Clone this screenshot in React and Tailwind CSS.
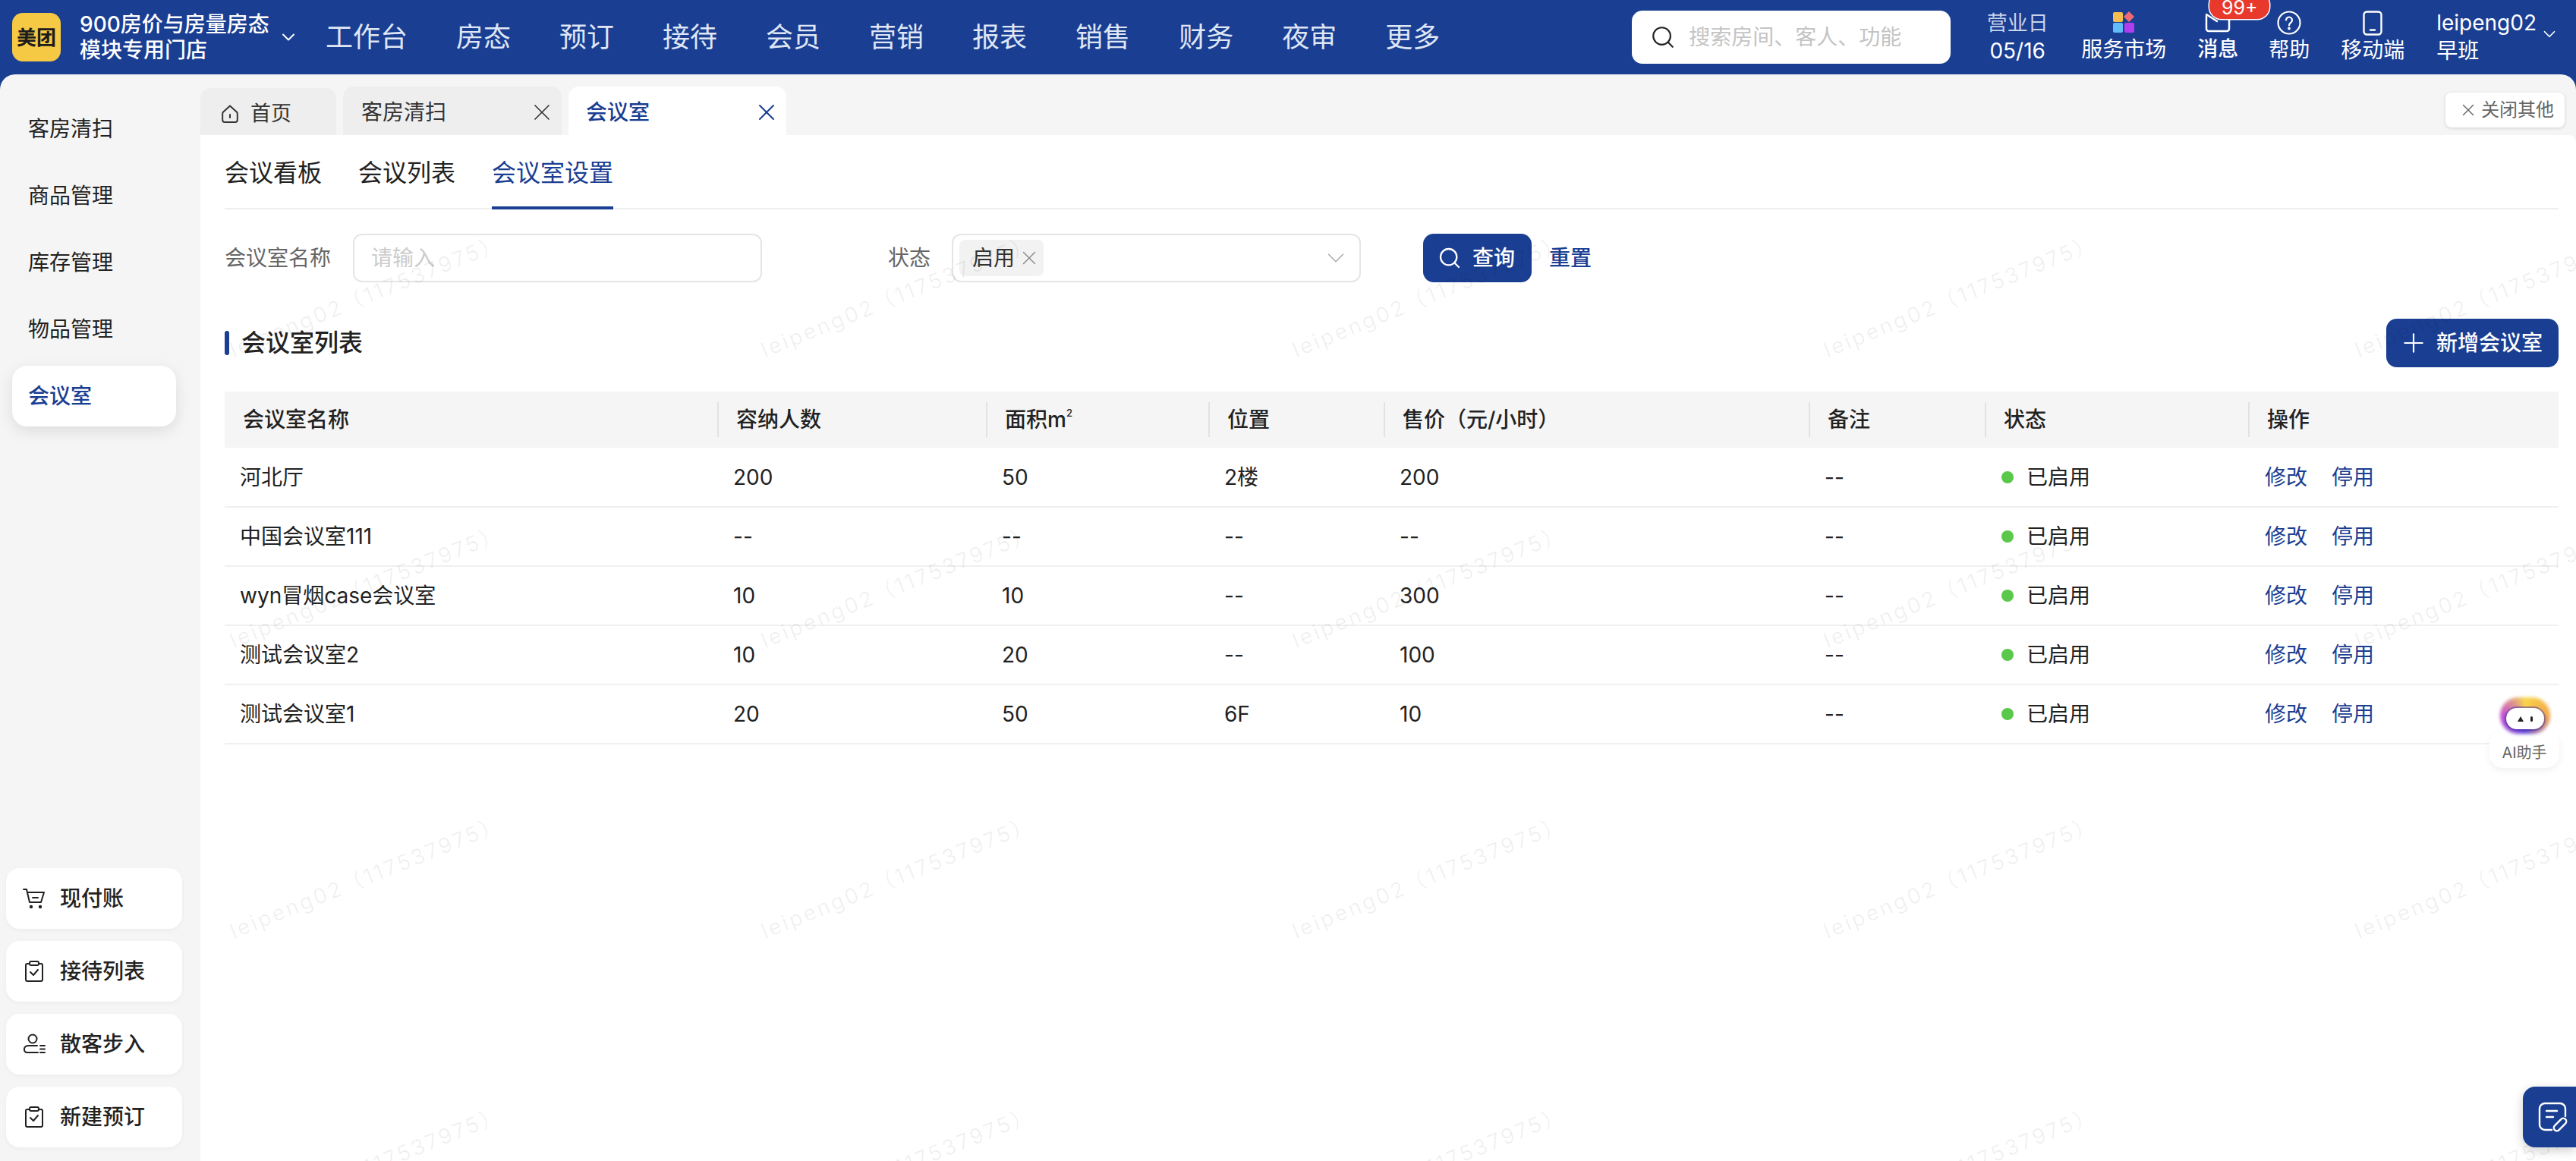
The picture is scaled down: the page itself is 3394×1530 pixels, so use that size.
import React from "react";
import { ChevronDown, Search, X, Plus } from "lucide-react";

const navItems = ["工作台", "房态", "预订", "接待", "会员", "营销", "报表", "销售", "财务", "夜审", "更多"];
const sideItems = ["客房清扫", "商品管理", "库存管理", "物品管理"];

const columns = [
  { title: "会议室名称", w: "w-[650px]" },
  { title: "容纳人数", w: "w-[354px]" },
  { title: "面积", sup: true, w: "w-[293px]" },
  { title: "位置", w: "w-[231px]" },
  { title: "售价（元/小时）", w: "w-[560px]" },
  { title: "备注", w: "w-[232px]" },
  { title: "状态", w: "w-[347px]" },
  { title: "操作", w: "w-[408px]" },
];

const rows = [
  ["河北厅", "200", "50", "2楼", "200", "--"],
  ["中国会议室111", "--", "--", "--", "--", "--"],
  ["wyn冒烟case会议室", "10", "10", "--", "300", "--"],
  ["测试会议室2", "10", "20", "--", "100", "--"],
  ["测试会议室1", "20", "50", "6F", "10", "--"],
];

function CartIcon() {
  return (
    <svg width="30" height="28" viewBox="0 0 30 28" fill="none" stroke="#222" strokeWidth="2" strokeLinecap="round" strokeLinejoin="round">
      <path d="M1 2h4l4 17h15l4-13H6" />
      <path d="M13 13h7" />
      <circle cx="11" cy="25" r="1.2" fill="#222" />
      <circle cx="23" cy="25" r="1.2" fill="#222" />
    </svg>
  );
}

function ClipboardIcon() {
  return (
    <svg width="30" height="30" viewBox="0 0 30 30" fill="none" stroke="#222" strokeWidth="2" strokeLinecap="round" strokeLinejoin="round">
      <path d="M9 5H6a2 2 0 0 0-2 2v19a2 2 0 0 0 2 2h18a2 2 0 0 0 2-2V7a2 2 0 0 0-2-2h-3" />
      <rect x="9" y="2" width="12" height="5" rx="2" />
      <path d="M10 16l4 4 6-7" />
    </svg>
  );
}

function GuestIcon() {
  return (
    <svg width="30" height="28" viewBox="0 0 30 28" fill="none" stroke="#222" strokeWidth="2" strokeLinecap="round">
      <circle cx="13" cy="7" r="5.500" />
      <path d="M19 16H9a6 4 0 0 0-7 4a4 4 0 0 0 4 5h14" />
      <path d="M23 16h6M23 20.500h6M23 25h6" />
    </svg>
  );
}

function HomeIcon() {
  return (
    <svg width="22" height="24" viewBox="0 0 22 24" fill="none" stroke="#333" strokeWidth="2" strokeLinecap="round" strokeLinejoin="round">
      <path d="M11 1.500L2.200 9.500a3 3 0 0 0-1 2.200V20a3 3 0 0 0 3 3h13.600a3 3 0 0 0 3-3v-8.300a3 3 0 0 0-1-2.200z" />
      <path d="M11 13v4" />
    </svg>
  );
}

function MarketIcon() {
  return (
    <svg width="28" height="28" viewBox="0 0 28 28">
      <rect x="0" y="1" width="13" height="13" rx="2" fill="#f5bf4f" />
      <path d="M21 0l7 7-7 7-7-7z" fill="#ee6a72" />
      <rect x="0" y="15" width="13" height="13" rx="2" fill="#62bcf8" />
      <rect x="15" y="15" width="13" height="13" rx="2" fill="#b03df0" />
    </svg>
  );
}

function MsgIcon() {
  return (
    <svg width="34" height="28" viewBox="0 0 34 28" fill="none" stroke="#fff" strokeWidth="2.500" strokeLinecap="round" strokeLinejoin="round">
      <path d="M2 6v17a3 3 0 0 0 3 3h24a3 3 0 0 0 3-3V10" />
      <path d="M2 4l14 9" />
    </svg>
  );
}

function HelpIcon() {
  return (
    <svg width="32" height="32" viewBox="0 0 32 32" fill="none" stroke="#fff" strokeWidth="2.200" strokeLinecap="round">
      <circle cx="16" cy="16" r="14.500" />
      <path d="M12 12.500a4 4 0 1 1 6 3.500c-1.500 1-2 1.800-2 3.500" />
      <circle cx="16" cy="23.500" r="0.800" fill="#fff" />
    </svg>
  );
}

function PhoneIcon() {
  return (
    <svg width="26" height="33" viewBox="0 0 26 33" fill="none" stroke="#fff" strokeWidth="2.400" strokeLinecap="round">
      <rect x="1.500" y="1.500" width="23" height="30" rx="4" />
      <path d="M10 25.500h6" />
    </svg>
  );
}

function NoteIcon() {
  return (
    <svg width="40" height="40" viewBox="0 0 40 40" fill="none" stroke="#fff" strokeWidth="2.400" strokeLinecap="round" strokeLinejoin="round">
      <path d="M18 37H9a7 7 0 0 1-7-7V9a7 7 0 0 1 7-7h20a7 7 0 0 1 7 7v10" />
      <path d="M11 12h14M11 20h9" />
      <rect x="19" y="26" width="20" height="8" rx="4" transform="rotate(-45 29 30)" />
    </svg>
  );
}

function AiIcon() {
  return (
    <div className="relative h-[50px] w-[68px]">
      <div className="absolute inset-[1px] rounded-[24px] bg-[conic-gradient(#f8d84a,#f3a84a,#5a40d8,#c34fd0,#f8d84a)] blur-[2px]" />
      <div className="absolute left-[9px] top-[15px] flex h-[28px] w-[50px] items-center justify-center gap-[9px] rounded-[14px] bg-white shadow-[0_0_0_2px_rgba(70,50,160,0.5)]">
        <span className="border-x-[4px] border-b-[7px] border-x-transparent border-b-[#222]" />
        <span className="h-[7px] w-[3px] rounded-full bg-[#222]" />
      </div>
    </div>
  );
}

function Watermarks() {
  const marks = [];
  for (let i = 0; i < 20; i++) {
    marks.push(
      <div key={i} className="flex items-center justify-center">
        <span className="-rotate-[22deg] whitespace-nowrap text-[28px] tracking-[3px] text-[#000000]/[0.06]">leipeng02（117537975）</span>
      </div>
    );
  }
  return (
    <div className="pointer-events-none absolute inset-0 overflow-hidden">
      <div className="ml-[-131px] mt-[20px] grid grid-cols-[repeat(5,700px)] grid-rows-[repeat(4,383px)]">{marks}</div>
    </div>
  );
}

function Header() {
  return (
    <div className="flex h-[98px] shrink-0 items-center bg-[#1a3e92] pl-[16px] text-white">
      <div className="flex h-[64px] w-[64px] items-center justify-center rounded-[14px] bg-[#f6c945] text-[26px] font-bold text-[#1c1c1c]">美团</div>
      <div className="ml-[25px] w-[252px] text-[28px] font-medium leading-[34px]">
        <div>900房价与房量房态</div>
        <div>模块专用门店</div>
      </div>
      <ChevronDown size={28} strokeWidth={1.7} className="ml-[9px]" />
      <div className="ml-[35px] flex gap-[64px] text-[36px] text-[#dfe6f5]">
        {navItems.map((n) => (
          <span key={n}>{n}</span>
        ))}
      </div>
      <div className="ml-[253px] flex h-[70px] w-[420px] items-center rounded-[14px] bg-white pl-[24px]">
        <Search size={34} color="#222" strokeWidth={1.5} />
        <span className="ml-[17px] text-[28px] text-[#c4c4c4]">搜索房间、客人、功能</span>
      </div>
      <div className="ml-[46px] flex w-[84px] flex-col items-center text-[27px] leading-[36px]">
        <span className="text-[#c9d3ea]">营业日</span>
        <span className="text-[28px]">05/16</span>
      </div>
      <div className="ml-[42px] flex w-[112px] flex-col items-center text-[28px]">
        <MarketIcon />
        <span className="mt-[4px] leading-[36px]">服务市场</span>
      </div>
      <div className="relative ml-[40px] flex w-[56px] flex-col items-center text-[27px]">
        <MsgIcon />
        <span className="mt-[4px] font-medium leading-[36px]">消息</span>
        <span className="absolute left-[17px] top-[-25px] flex h-[35px] w-[79px] items-end justify-center rounded-[16px] bg-[#e8392c] text-[25px] leading-[30px] shadow-[0_0_0_1.5px_#ffffff]">99+</span>
      </div>
      <div className="ml-[38px] flex w-[56px] flex-col items-center text-[27px]">
        <HelpIcon />
        <span className="mt-[2px] leading-[36px]">帮助</span>
      </div>
      <div className="ml-[40px] flex w-[84px] flex-col items-center text-[28px]">
        <PhoneIcon />
        <span className="mt-[1px] leading-[36px]">移动端</span>
      </div>
      <div className="ml-[42px] flex flex-col text-[28px] leading-[37px]">
        <span>leipeng02</span>
        <span>早班</span>
      </div>
      <ChevronDown size={26} strokeWidth={1.6} className="mb-[8px] ml-[4px]" />
    </div>
  );
}

function Sidebar() {
  return (
    <div className="flex w-[264px] shrink-0 flex-col pb-[18px] text-[28px] text-[#222]">
      <div className="flex flex-col gap-[8px] pl-[16px] pr-[32px] pt-[32px]">
        {sideItems.map((s) => (
          <div key={s} className="flex h-[80px] items-center pl-[21px]">
            {s}
          </div>
        ))}
        <div className="flex h-[80px] items-center rounded-[20px] bg-white pl-[21px] font-medium text-[#1a3e92] shadow-[0_6px_20px_rgba(0,0,0,0.1)]">会议室</div>
      </div>
      <div className="mt-auto flex flex-col gap-[16px] pl-[8px] pr-[24px]">
        <SideBtn icon={<CartIcon />} label="现付账" />
        <SideBtn icon={<ClipboardIcon />} label="接待列表" />
        <SideBtn icon={<GuestIcon />} label="散客步入" />
        <SideBtn icon={<ClipboardIcon />} label="新建预订" />
      </div>
    </div>
  );
}

function SideBtn({ icon, label }) {
  return (
    <div className="flex h-[80px] items-center rounded-[18px] bg-white shadow-[0_2px_6px_rgba(0,0,0,0.04)]">
      <div className="flex w-[71px] justify-end pr-[19px]">{icon}</div>
      <span className="font-medium">{label}</span>
    </div>
  );
}

function Tabs() {
  return (
    <div className="relative flex h-[80px] shrink-0 items-end gap-[9px] pt-[16px] text-[28px]">
      <div className="flex h-[62px] w-[179px] items-center rounded-t-[14px] bg-[#eeeeee] pl-[28px] pt-[6px] text-[#333]">
        <HomeIcon />
        <span className="ml-[16px] text-[27px]">首页</span>
      </div>
      <div className="flex h-[64px] w-[288px] items-center justify-between rounded-t-[14px] bg-[#eeeeee] pl-[24px] pr-[8px] pt-[4px] text-[#333]">
        <span>客房清扫</span>
        <X size={36} strokeWidth={1.1} />
      </div>
      <div className="flex h-[64px] w-[287px] items-center justify-between rounded-t-[14px] bg-white pl-[23px] pr-[8px] pt-[4px] font-medium text-[#1a3e92]">
        <span>会议室</span>
        <X size={36} strokeWidth={1.3} />
      </div>
      <div className="absolute right-[15px] top-[24px] flex h-[46px] w-[157px] items-center rounded-[8px] bg-white pl-[17px] text-[24px] text-[#666] shadow-[0_1px_4px_rgba(0,0,0,0.15)]">
        <X size={26} strokeWidth={1.3} />
        <span className="ml-[4px]">关闭其他</span>
      </div>
    </div>
  );
}

function SubTabs() {
  return (
    <div className="flex h-[98px] gap-[48px] border-b-2 border-[#eeeeee] text-[32px] text-[#222]">
      <span className="pt-[28px] leading-[44px]">会议看板</span>
      <span className="pt-[28px] leading-[44px]">会议列表</span>
      <span className="h-[98px] border-b-4 border-[#1a3e92] pt-[28px] leading-[44px] text-[#1a3e92]">会议室设置</span>
    </div>
  );
}

function Filters() {
  return (
    <div className="mt-[32px] flex items-center text-[28px]">
      <span className="w-[169px] text-[#666]">会议室名称</span>
      <div className="flex h-[64px] w-[539px] items-center rounded-[12px] border-2 border-[#e5e5e5] pl-[22px] text-[#cccccc]">请输入</div>
      <span className="ml-[166px] w-[84px] text-[#666]">状态</span>
      <div className="flex h-[64px] w-[539px] items-center justify-between rounded-[12px] border-2 border-[#e5e5e5] pl-[8px] pr-[12px]">
        <div className="flex h-[48px] w-[111px] items-center rounded-[8px] bg-[#f2f2f2] pl-[17px] text-[#333]">
          启用
          <X size={30} color="#888" strokeWidth={1.1} className="ml-[4px]" />
        </div>
        <ChevronDown size={38} color="#aaa" strokeWidth={1} />
      </div>
      <div className="ml-[82px] flex h-[64px] w-[143px] items-center rounded-[14px] bg-[#1a3e92] pl-[19px] font-medium text-white">
        <Search size={32} strokeWidth={1.7} />
        <span className="ml-[14px]">查询</span>
      </div>
      <span className="ml-[23px] font-medium text-[#1a3e92]">重置</span>
    </div>
  );
}

function RoomTable() {
  return (
    <table className="mt-[32px] w-[3075px] table-fixed border-collapse text-[28px] text-[#222]">
      <thead>
        <tr className="h-[74px] bg-[#f5f5f5]">
          {columns.map((c, i) => (
            <th key={c.title} className={`${c.w} p-0 text-left font-medium`}>
              <div className={i === 0 ? "pl-[24px]" : "ml-[-1px] flex h-[46px] items-center border-l-2 border-[#e2e2e2] pl-[23px]"}>
                {c.title}
                {c.sup && (
                  <span>
                    m<sup className="top-[-14px] text-[13px]">2</sup>
                  </span>
                )}
              </div>
            </th>
          ))}
        </tr>
      </thead>
      <tbody>
        {rows.map((r) => (
          <tr key={r[0]} className="h-[78px] border-b-2 border-[#f0f0f0]">
            {r.map((v, i) => (
              <td key={i} className="p-0 pl-[20px]">
                {v}
              </td>
            ))}
            <td className="p-0 pl-[21px]">
              <div className="flex items-center">
                <span className="h-[16px] w-[16px] rounded-full bg-[#5ac84a]" />
                <span className="ml-[17px]">已启用</span>
              </div>
            </td>
            <td className="p-0 pl-[21px] text-[#1a3e92]">
              <span>修改</span>
              <span className="ml-[32px]">停用</span>
            </td>
          </tr>
        ))}
      </tbody>
    </table>
  );
}

export default function App() {
  return (
    <div className="relative flex h-screen w-full flex-col overflow-hidden bg-[#1a3e92] font-['Inter','Noto_Sans_CJK_SC',sans-serif]">
      <Header />
      <div className="flex min-h-0 flex-1 overflow-hidden rounded-t-[20px] bg-[#f5f5f5]">
        <Sidebar />
        <div className="flex min-w-0 flex-1 flex-col">
          <Tabs />
          <div className="relative flex-1 rounded-tr-[10px] bg-white pl-[32px] pr-[23px]">
            <SubTabs />
            <Filters />
            <div className="mt-[48px] flex h-[64px] items-center justify-between">
              <div className="flex items-center text-[32px] font-medium text-[#222]">
                <span className="mr-[16px] h-[32px] w-[6px] rounded-[3px] bg-[#1a3e92]" />
                会议室列表
              </div>
              <div className="flex h-[64px] w-[227px] items-center rounded-[14px] bg-[#1a3e92] pl-[16px] text-[28px] font-medium text-white">
                <Plus size={40} strokeWidth={1.3} />
                <span className="ml-[10px]">新增会议室</span>
              </div>
            </div>
            <RoomTable />
            <Watermarks />
          </div>
        </div>
      </div>
      <div className="absolute right-[22px] top-[962px] flex h-[50px] w-[92px] items-end justify-center rounded-[18px] bg-white pb-[8px] shadow-[0_4px_10px_rgba(0,0,0,0.06)]">
        <span className="text-[20px] leading-[24px] text-[#666]">AI助手</span>
      </div>
      <div className="absolute right-[33px] top-[918px]">
        <AiIcon />
      </div>
      <div className="absolute right-0 top-[1432px] flex h-[80px] w-[70px] items-center rounded-l-[16px] bg-[#1a3e92] pl-[20px] shadow-[0_4px_14px_rgba(0,0,0,0.2)]">
        <NoteIcon />
      </div>
    </div>
  );
}
